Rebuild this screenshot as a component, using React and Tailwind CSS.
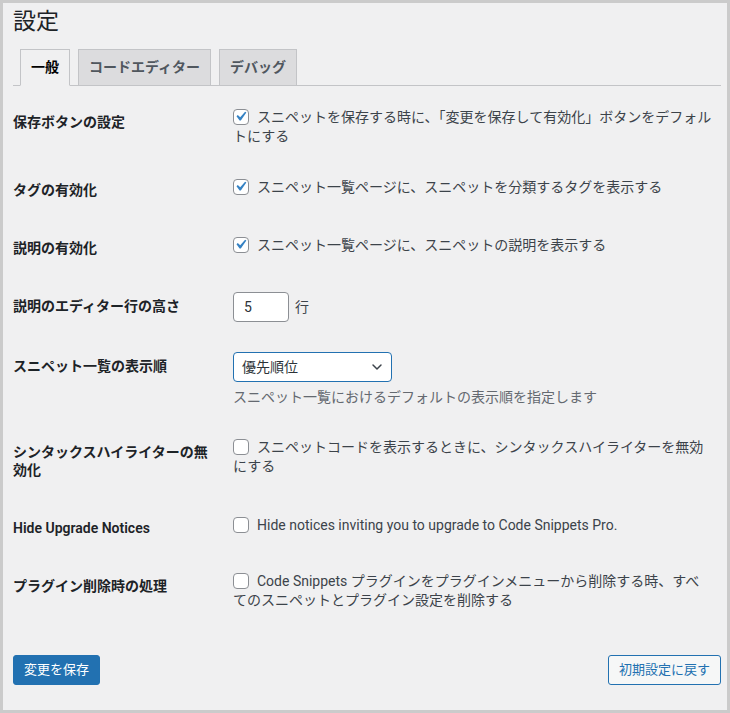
import { ChevronDown } from 'lucide-react';

const font = { fontFamily: 'Roboto, "Noto Sans CJK JP", sans-serif' };

const Checkbox = ({ checked }) => (
  <span className="mr-2 inline-flex h-4 w-4 shrink-0 items-center justify-center rounded-[4px] border border-[#8c8f94] bg-white">
    {checked && (
      <svg viewBox="0 0 20 20" className="h-[19px] w-[19px] shrink-0 -ml-[2px] -mt-[2px]">
        <path d="M14.83 4.89l1.34.94-5.81 8.38H9.02L5.78 9.67l1.34-1.25 2.57 2.4z" fill="#3582c4" />
      </svg>
    )}
  </span>
);

const Row = ({ label, children }) => (
  <div className="flex items-start">
    <div className="w-[210px] shrink-0 pr-[10px] pt-5 pb-5 text-[14px] font-semibold leading-[18px] text-[#1d2327]">{label}</div>
    <div className="py-[15px] pl-[10px] text-[14px] leading-[19px] text-[#3c434a]">{children}</div>
  </div>
);

const CheckLine = ({ checked, lines }) => (
  <div className="flex items-start">
    <span className="pt-[1px]"><Checkbox checked={checked} /></span>
    <div className="whitespace-nowrap">
      {lines.map((l, i) => (
        <div key={i} className={i > 0 ? '-ml-6' : ''}>{l}</div>
      ))}
    </div>
  </div>
);

export default function App() {
  return (
    <div style={font} className="h-[713px] w-[730px] overflow-hidden border-[3px] border-[#cbcbcb] bg-[#f0f0f1] pl-[10px] pr-[6px]">
      <h1 className="pt-[4px] text-[23px] font-normal leading-[30px] text-[#1d2327]">設定</h1>

      <div className="mt-[12px] flex items-end border-b border-[#c3c4c7]">
        <div className="ml-[7px] -mb-px border border-[#c3c4c7] border-b-[#f0f0f1] bg-[#f0f0f1] px-[10px] py-[5px] text-[14px] font-semibold leading-[25px] text-[#000]">一般</div>
        <div className="ml-[8px] -mb-px border border-[#c3c4c7] bg-[#dcdcde] px-[10px] py-[5px] text-[14px] font-semibold leading-[25px] text-[#50575e]">コードエディター</div>
        <div className="ml-[8px] -mb-px border border-[#c3c4c7] bg-[#dcdcde] px-[10px] py-[5px] text-[14px] font-semibold leading-[25px] text-[#50575e]">デバッグ</div>
      </div>

      <div className="mt-[7px]">
        <Row label="保存ボタンの設定">
          <CheckLine checked lines={['スニペットを保存する時に、「変更を保存して有効化」ボタンをデフォル', 'トにする']} />
        </Row>
        <Row label="タグの有効化">
          <div className="pt-[2px]">
            <CheckLine checked lines={['スニペット一覧ページに、スニペットを分類するタグを表示する']} />
          </div>
        </Row>
        <Row label="説明の有効化">
          <div className="pt-[2px]">
            <CheckLine checked lines={['スニペット一覧ページに、スニペットの説明を表示する']} />
          </div>
        </Row>
        <Row label="説明のエディター行の高さ">
          <div className="flex items-center">
            <div className="flex h-[30px] w-[56px] items-center rounded-[4px] border border-[#8c8f94] bg-white px-[10px] text-[14px] text-[#2c3338]">5</div>
            <span className="ml-[6px]">行</span>
          </div>
        </Row>
        <Row label="スニペット一覧の表示順">
          <div className="flex h-[30px] w-[159px] items-center justify-between rounded-[4px] border-[1.5px] border-[#2271b1] bg-white pl-[8px] pr-[6px] text-[14px] text-[#2c3338]">
            <span>優先順位</span>
            <ChevronDown className="h-4 w-4 text-[#3c434a]" strokeWidth={2.2} />
          </div>
          <p className="mt-[5px] leading-[21px] text-[#646970]">スニペット一覧におけるデフォルトの表示順を指定します</p>
        </Row>
        <Row label={<>シンタックスハイライターの無<br />効化</>}>
          <CheckLine lines={['スニペットコードを表示するときに、シンタックスハイライターを無効', 'にする']} />
        </Row>
        <Row label="Hide Upgrade Notices">
          <div className="pt-[2px]">
            <CheckLine lines={['Hide notices inviting you to upgrade to Code Snippets Pro.']} />
          </div>
        </Row>
        <Row label="プラグイン削除時の処理">
          <CheckLine lines={['Code Snippets プラグインをプラグインメニューから削除する時、すべ', 'てのスニペットとプラグイン設定を削除する']} />
        </Row>
      </div>

      <div className="mt-[30px] flex items-center justify-between">
        <button className="h-[30px] rounded-[3px] border border-[#2271b1] bg-[#2271b1] px-[10px] text-[13px] text-white">変更を保存</button>
        <button className="h-[30px] rounded-[3px] border border-[#2271b1] bg-[#f6f7f7] px-[10px] text-[13px] text-[#2271b1]">初期設定に戻す</button>
      </div>
    </div>
  );
}
